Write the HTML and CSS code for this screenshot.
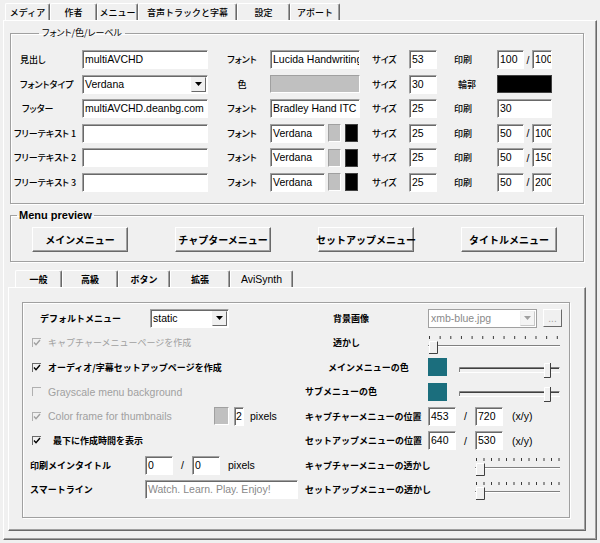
FILE: index.html
```html
<!DOCTYPE html>
<html lang="ja">
<head>
<meta charset="utf-8">
<title>multiAVCHD</title>
<link rel="stylesheet" href="styles.css">
</head>
<body>
<div class="win">
  <div class="tabs">
    <div class="tab t1">メディア</div>
    <div class="tab t2">作者</div>
    <div class="tab t3">メニュー</div>
    <div class="tab t4">音声トラックと字幕</div>
    <div class="tab t5">設定</div>
    <div class="tab t6">アボート</div>
  </div>
  <div class="page">
    <fieldset class="group gfont">
      <legend>フォント/色/レーベル</legend>
      <div class="fgrid">
        <span class="lbl la">見出し</span>
        <span class="in w126">multiAVCHD</span>
        <span class="lbl2">フォント</span>
        <span class="in w90">Lucida Handwriting</span>
        <span class="lbl3">サイズ</span>
        <span class="in w28">53</span>
        <span class="lbl4">印刷</span>
        <span class="pair"><span class="in w27">100</span><span class="slash">/</span><span class="in w20">100</span></span>

        <span class="lbl la">フォントタイプ</span>
        <span class="sel w126"><span class="val">Verdana</span><span class="arrow"><svg width="7" height="4" viewBox="0 0 7 4"><path d="M0 0h7L3.5 4z" fill="#000"/></svg></span></span>
        <span class="lbl2">色</span>
        <span class="sw gray w90"></span>
        <span class="lbl3">サイズ</span>
        <span class="in w28">30</span>
        <span class="lbl4 lb4b">輪郭</span>
        <span class="sw black w55"></span>

        <span class="lbl lc">フッター</span>
        <span class="in w126">multiAVCHD.deanbg.com</span>
        <span class="lbl2">フォント</span>
        <span class="in w90">Bradley Hand ITC</span>
        <span class="lbl3">サイズ</span>
        <span class="in w28">25</span>
        <span class="lbl4">印刷</span>
        <span class="in w55">30</span>

        <span class="lbl lf">フリーテキスト 1</span>
        <span class="in w126"></span>
        <span class="lbl2">フォント</span>
        <span class="fcell"><span class="in w55">Verdana</span><span class="sw gray s13"></span><span class="sw black s13"></span></span>
        <span class="lbl3">サイズ</span>
        <span class="in w28">25</span>
        <span class="lbl4">印刷</span>
        <span class="pair"><span class="in w27">50</span><span class="slash">/</span><span class="in w20">100</span></span>

        <span class="lbl lf">フリーテキスト 2</span>
        <span class="in w126"></span>
        <span class="lbl2">フォント</span>
        <span class="fcell"><span class="in w55">Verdana</span><span class="sw gray s13"></span><span class="sw black s13"></span></span>
        <span class="lbl3">サイズ</span>
        <span class="in w28">25</span>
        <span class="lbl4">印刷</span>
        <span class="pair"><span class="in w27">50</span><span class="slash">/</span><span class="in w20">150</span></span>

        <span class="lbl lf">フリーテキスト 3</span>
        <span class="in w126"></span>
        <span class="lbl2">フォント</span>
        <span class="fcell"><span class="in w55">Verdana</span><span class="sw gray s13"></span><span class="sw black s13"></span></span>
        <span class="lbl3">サイズ</span>
        <span class="in w28">25</span>
        <span class="lbl4">印刷</span>
        <span class="pair"><span class="in w27">50</span><span class="slash">/</span><span class="in w20">200</span></span>
      </div>
    </fieldset>

    <fieldset class="group gprev">
      <legend>Menu preview</legend>
      <div class="btnrow">
        <span class="btn">メインメニュー</span>
        <span class="btn">チャプターメニュー</span>
        <span class="btn">セットアップメニュー</span>
        <span class="btn">タイトルメニュー</span>
      </div>
    </fieldset>

    <div class="subtabs">
      <div class="stab active s1">一般</div>
      <div class="stab s2">高級</div>
      <div class="stab s3">ボタン</div>
      <div class="stab s4">拡張</div>
      <div class="stab s5 latin">AviSynth</div>
    </div>
    <div class="subpage">
      <div class="inner">
        <div class="lcol">
          <div class="row">
            <span class="lab pl17">デフォルトメニュー</span>
            <span class="sel w79 ml5"><span class="val">static</span><span class="arrow"><svg width="7" height="4" viewBox="0 0 7 4"><path d="M0 0h7L3.5 4z" fill="#000"/></svg></span></span>
          </div>
          <div class="row chk dis">
            <span class="cb"><svg width="8" height="8" viewBox="0 0 8 8"><path d="M1 3.5l2 2.2L7 1" fill="none" stroke="#a0a0a0" stroke-width="1.4"/></svg></span>
            <span class="ctext">キャプチャーメニューページを作成</span>
          </div>
          <div class="row chk">
            <span class="cb"><svg width="8" height="8" viewBox="0 0 8 8"><path d="M1 3.5l2 2.2L7 1" fill="none" stroke="#000" stroke-width="1.4"/></svg></span>
            <span class="ctext bold">オーディオ/字幕セットアップページを作成</span>
          </div>
          <div class="row chk dis">
            <span class="cb"></span>
            <span class="ctext latin">Grayscale menu background</span>
          </div>
          <div class="row chk dis">
            <span class="cb"><svg width="8" height="8" viewBox="0 0 8 8"><path d="M1 3.5l2 2.2L7 1" fill="none" stroke="#a0a0a0" stroke-width="1.4"/></svg></span>
            <span class="ctext latin wcf">Color frame for thumbnails</span>
            <span class="sw gray s15"></span>
            <span class="in w10 ml5">2</span>
            <span class="latin ml6 blk">pixels</span>
          </div>
          <div class="row chk">
            <span class="cb"><svg width="8" height="8" viewBox="0 0 8 8"><path d="M1 3.5l2 2.2L7 1" fill="none" stroke="#000" stroke-width="1.4"/></svg></span>
            <span class="ctext bold ml12">最下に作成時間を表示</span>
          </div>
          <div class="row">
            <span class="lab pl7">印刷メインタイトル</span>
            <span class="in w28">0</span>
            <span class="slash w19">/</span>
            <span class="in w28">0</span>
            <span class="latin ml8">pixels</span>
          </div>
          <div class="row">
            <span class="lab pl7">スマートライン</span>
            <span class="in w153 ghost">Watch. Learn. Play. Enjoy!</span>
          </div>
        </div>

        <div class="rcol">
          <div class="row">
            <span class="rlab pl31">背景画像</span>
            <span class="sel dsel w109"><span class="val">xmb-blue.jpg</span><span class="arrow"><svg width="7" height="4" viewBox="0 0 7 4"><path d="M0 0h7L3.5 4z" fill="#a0a0a0"/></svg></span></span>
            <span class="dots">...</span>
          </div>
          <div class="row">
            <span class="rlab pl31">透かし</span>
            <svg class="slider" width="132" height="22" viewBox="0 0 132 22">
              <g stroke="#3a3a3a">
                <path d="M1.5 3v3M12.15 3v3M22.8 3v3M33.45 3v3M44.1 3v3M54.75 3v3M65.4 3v3M76.05 3v3M86.7 3v3M97.35 3v3M108 3v3M118.65 3v3M129.3 3v3"/>
              </g>
              <path d="M0 12.5h132" stroke="#808080"/>
              <path d="M0 13.5h132" stroke="#fff"/>
              <rect x="1" y="9" width="8" height="11" fill="#f0f0f0"/>
              <path d="M1.5 20V8.5h8" fill="none" stroke="#fff"/>
              <path d="M9.5 8.5v12H1" fill="none" stroke="#404040"/>
            </svg>
          </div>
          <div class="row">
            <span class="rlab pl26">メインメニューの色</span>
            <span class="sw teal"></span>
            <svg class="slider ml11" width="102" height="22" viewBox="0 0 102 22">
              <path d="M1.5 15V9.5h100" fill="none" stroke="#808080"/>
              <path d="M2 10.5h99" stroke="#404040"/>
              <path d="M1 14.5h101" stroke="#fff"/>
              <rect x="86" y="5" width="6" height="14" fill="#f0f0f0"/>
              <path d="M86.5 19V5.5h6" fill="none" stroke="#fff"/>
              <path d="M92.5 5v14.5H86" fill="none" stroke="#404040"/>
            </svg>
          </div>
          <div class="row">
            <span class="rlab pl3">サブメニューの色</span>
            <span class="sw teal"></span>
            <svg class="slider ml11" width="102" height="22" viewBox="0 0 102 22">
              <path d="M1.5 15V9.5h100" fill="none" stroke="#808080"/>
              <path d="M2 10.5h99" stroke="#404040"/>
              <path d="M1 14.5h101" stroke="#fff"/>
              <rect x="86" y="5" width="6" height="14" fill="#f0f0f0"/>
              <path d="M86.5 19V5.5h6" fill="none" stroke="#fff"/>
              <path d="M92.5 5v14.5H86" fill="none" stroke="#404040"/>
            </svg>
          </div>
          <div class="row">
            <span class="rlab pl3">キャプチャーメニューの位置</span>
            <span class="in w28">453</span>
            <span class="slash w19">/</span>
            <span class="in w28">720</span>
            <span class="latin ml9">(x/y)</span>
          </div>
          <div class="row">
            <span class="rlab pl3">セットアップメニューの位置</span>
            <span class="in w28">640</span>
            <span class="slash w19">/</span>
            <span class="in w28">530</span>
            <span class="latin ml9">(x/y)</span>
          </div>
          <div class="row">
            <span class="rlab pl3">キャプチャーメニューの透かし</span>
            <svg class="slider ml47" width="85" height="22" viewBox="0 0 85 22">
              <g stroke="#3a3a3a">
                <path d="M1.5 2v3M9 2v3M16.5 2v3M24 2v3M31.5 2v3M39 2v3M46.5 2v3M54 2v3M61.5 2v3M69 2v3M76.5 2v3M84 2v3"/>
              </g>
              <path d="M0 11.5h85" stroke="#808080"/>
              <path d="M0 12.5h85" stroke="#fff"/>
              <rect x="1" y="8" width="8" height="11" fill="#f0f0f0"/>
              <path d="M1.5 19V7.5h8" fill="none" stroke="#fff"/>
              <path d="M9.5 7.5v12H1" fill="none" stroke="#404040"/>
            </svg>
          </div>
          <div class="row">
            <span class="rlab pl3">セットアップメニューの透かし</span>
            <svg class="slider ml47" width="85" height="22" viewBox="0 0 85 22">
              <g stroke="#3a3a3a">
                <path d="M1.5 2v3M9 2v3M16.5 2v3M24 2v3M31.5 2v3M39 2v3M46.5 2v3M54 2v3M61.5 2v3M69 2v3M76.5 2v3M84 2v3"/>
              </g>
              <path d="M0 11.5h85" stroke="#808080"/>
              <path d="M0 12.5h85" stroke="#fff"/>
              <rect x="1" y="8" width="8" height="11" fill="#f0f0f0"/>
              <path d="M1.5 19V7.5h8" fill="none" stroke="#fff"/>
              <path d="M9.5 7.5v12H1" fill="none" stroke="#404040"/>
            </svg>
          </div>
        </div>
      </div>
    </div>
  </div>
</div>
</body>
</html>
```

FILE: styles.css
```css
* { box-sizing: border-box; }
html, body { margin: 0; padding: 0; background: #f0f0f0; }
body {
  width: 600px;
  height: 543px;
  overflow: hidden;
  font-family: "Noto Sans CJK JP", sans-serif;
  font-size: 9px;
  color: #000;
}
.latin { font-family: "Liberation Sans", Arial, sans-serif; font-size: 10.5px; }
.bold { font-weight: bold; }

.win { padding: 3px 0 0 3px; width: 598px; }

/* top tabs */
.tabs { display: flex; height: 17px; padding-left: 2px; }
.tab {
  height: 17px;
  display: flex;
  align-items: center;
  justify-content: center;
  border-top: 1px solid #fff;
  border-left: 1px solid #fff;
  border-right: 1px solid #696969;
  box-shadow: inset -1px 0 0 #a0a0a0;
  border-radius: 2px 2px 0 0;
  white-space: nowrap;
  font-weight: 500;
}
.t1 { width: 45px; }
.t2 { width: 47px; }
.t3 { width: 41px; }
.t4 { width: 99px; }
.t5 { width: 53px; }
.t6 { width: 50px; }

.page {
  width: 594px;
  height: 520px;
  border-top: 1px solid #fff;
  border-left: 1px solid #fff;
  border-right: 1px solid #696969;
  border-bottom: 1px solid #696969;
  box-shadow: inset -1px -1px 0 #a0a0a0;
  padding: 6px 12px 0 6px;
}

/* group boxes */
.group {
  margin: 0;
  padding: 0;
  min-width: 0;
  border: 1px solid #a0a0a0;
  box-shadow: inset 1px 1px 0 #fff, 1px 1px 0 #fff;
}
.group legend {
  padding: 0 3px;
  line-height: 12px;
  font-size: 9px;
  font-feature-settings: "palt";
}
.gfont legend { margin-left: 28px; }
.gprev { margin-top: 5px; }
.gprev legend {
  margin-left: 6px;
  padding: 0 2px;
  font-family: "Liberation Sans", Arial, sans-serif;
  font-weight: bold;
  font-size: 11px;
}

.fgrid {
  display: grid;
  grid-template-columns: 71px 128px 60px 90px 49px 28px 60px 55px;
  grid-auto-rows: 19px;
  row-gap: 5.5px;
  align-items: center;
  padding: 11px 0 11.5px 0;
}
.lbl, .lbl2, .lbl3, .lbl4 {
  white-space: nowrap;
  font-weight: 500;
  font-feature-settings: "palt";
}
.la { padding-left: 9px; }
.lc { padding-left: 11px; }
.lf { padding-left: 3px; }
.lbl2 { text-align: center; padding-left: 4px; }
.lbl3 { text-align: center; }
.lbl4 { text-align: center; padding-right: 8px; }
.lb4b { padding-right: 0; }

/* fields */
.in, .sel {
  display: block;
  height: 19px;
  background: #fff;
  border-top: 1px solid #a0a0a0;
  border-left: 1px solid #a0a0a0;
  border-right: 1px solid #fff;
  border-bottom: 1px solid #fff;
  box-shadow: inset 1px 1px 0 #696969;
  font-family: "Liberation Sans", Arial, sans-serif;
  font-size: 10.5px;
  line-height: 17px;
  padding: 0 1px 0 2px;
  white-space: nowrap;
  overflow: hidden;
  color: #000;
}
.sel { display: flex; justify-content: space-between; align-items: center; padding-right: 1px; }
.arrow {
  width: 15px;
  height: 15px;
  display: flex;
  align-items: center;
  justify-content: center;
  background: #f0f0f0;
  border-top: 1px solid #f0f0f0;
  border-left: 1px solid #f0f0f0;
  border-right: 1px solid #696969;
  border-bottom: 1px solid #696969;
}
.dsel { border: 1px solid #a0a0a0; box-shadow: none; color: #8a8a8a; }
.dsel .arrow { border-right-color: #c8c8c8; border-bottom-color: #c8c8c8; background: #f4f4f4; }
.ghost { color: #8a8a8a; }

.w126 { width: 126px; }
.w90 { width: 90px; }
.w79 { width: 79px; }
.w109 { width: 109px; }
.w153 { width: 153px; }
.w55 { width: 55px; }
.w28 { width: 28px; }
.w27 { width: 27px; }
.w20 { width: 20px; }
.w10 { width: 10px; padding: 0 0 0 1px; }

.pair { display: flex; align-items: center; }
.slash { width: 8px; text-align: center; font-family: "Liberation Sans", Arial, sans-serif; font-size: 10.5px; }
.slash.w19 { width: 19px; }
.fcell { display: flex; align-items: center; }
.fcell .sw { margin-left: 3px; }
.fcell .sw + .sw { margin-left: 4px; }

.sw {
  display: block;
  height: 18px;
  border-top: 1px solid #a0a0a0;
  border-left: 1px solid #a0a0a0;
  border-right: 1px solid #fff;
  border-bottom: 1px solid #fff;
}
.sw.gray { background: #c0c0c0; }
.sw.black { background: #000; border-color: #404040; }
.sw.teal { width: 19px; background: #1b6e7d; border-color: #1b6e7d; }
.s13 { width: 13px; }
.s15 { width: 15px; }

/* preview buttons */
.btnrow { display: flex; gap: 47px; padding: 6px 0 9px 21px; }
.btn {
  width: 96px;
  height: 25px;
  display: flex;
  align-items: center;
  justify-content: center;
  background: #f0f0f0;
  border-top: 1px solid #fff;
  border-left: 1px solid #fff;
  border-right: 1px solid #696969;
  border-bottom: 1px solid #696969;
  box-shadow: inset -1px -1px 0 #a0a0a0;
  font-weight: bold;
  font-size: 10px;
  white-space: nowrap;
}

/* sub tabs */
.subtabs { display: flex; height: 17px; margin-top: 8px; padding-left: 5px; }
.stab {
  height: 17px;
  display: flex;
  align-items: center;
  justify-content: center;
  border-top: 1px solid #fff;
  border-left: 1px solid #fff;
  border-right: 1px solid #696969;
  box-shadow: inset -1px 0 0 #a0a0a0;
  border-radius: 2px 2px 0 0;
  font-weight: bold;
}
.stab.latin { font-weight: normal; }
.s1 { width: 47px; }
.s2 { width: 56px; }
.s3 { width: 52px; }
.s4 { width: 60px; }
.s5 { width: 63px; }

.subpage {
  margin: 0 -2px;
  height: 244px;
  border-top: 1px solid #fff;
  border-left: 1px solid #fff;
  border-right: 1px solid #696969;
  border-bottom: 1px solid #696969;
  box-shadow: inset -1px -1px 0 #a0a0a0;
  padding: 14px 0 0 13px;
}
.inner {
  width: 548px;
  height: 216px;
  border: 1px solid #a0a0a0;
  box-shadow: inset 1px 1px 0 #fff, 1px 1px 0 #fff;
  display: flex;
  padding-top: 5.5px;
}
.lcol, .rcol {
  display: grid;
  grid-auto-rows: 19px;
  row-gap: 5.5px;
  align-content: start;
}
.lcol { width: 279px; }
.rcol { width: 267px; }
.row { display: flex; align-items: center; white-space: nowrap; }
.lab { width: 122px; font-weight: bold; }
.rlab { width: 126px; font-weight: bold; }
.pl3 { padding-left: 3px; }
.pl7 { padding-left: 7px; }
.pl17 { padding-left: 17px; }
.pl26 { padding-left: 26px; }
.pl31 { padding-left: 31px; }
.ml5 { margin-left: 5px; }
.ml6 { margin-left: 6px; }
.ml8 { margin-left: 8px; }
.ml9 { margin-left: 9px; }
.ml11 { margin-left: 11px; }
.ml12 { margin-left: 12px !important; }
.ml47 { margin-left: 47px; }

.chk { padding-left: 9px; }
.cb {
  width: 9px;
  height: 9px;
  display: flex;
  align-items: center;
  justify-content: center;
  border-top: 1px solid #6a6a6a;
  border-left: 1px solid #6a6a6a;
}
.dis .cb { border-color: #b0b0b0; }
.ctext { margin-left: 7px; }
.dis .ctext { color: #a0a0a0; }
.wcf { width: 166px; }
.blk { color: #000; }

.slider { display: block; align-self: flex-start; overflow: visible; }

.dots {
  width: 19px;
  height: 18px;
  margin-left: 6px;
  display: flex;
  align-items: flex-end;
  justify-content: center;
  padding-bottom: 3px;
  font-family: "Liberation Sans", Arial, sans-serif;
  font-size: 10px;
  line-height: 8px;
  color: #a0a0a0;
  border-top: 1px solid #fff;
  border-left: 1px solid #fff;
  border-right: 1px solid #696969;
  border-bottom: 1px solid #696969;
}
```
